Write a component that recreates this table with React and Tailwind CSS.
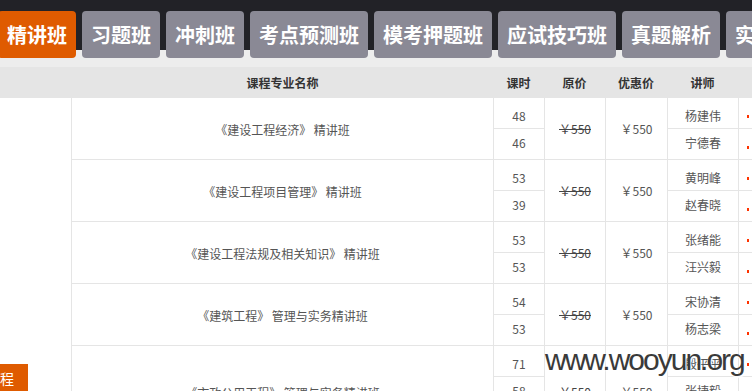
import React from "react";

const tabs = ["精讲班", "习题班", "冲刺班", "考点预测班", "模考押题班", "应试技巧班", "真题解析", "实战模拟"];

const groups = [
  { name: "《建设工程经济》 精讲班", rows: [["48", "杨建伟"], ["46", "宁德春"]] },
  { name: "《建设工程项目管理》 精讲班", rows: [["53", "黄明峰"], ["39", "赵春晓"]] },
  { name: "《建设工程法规及相关知识》 精讲班", rows: [["53", "张绪能"], ["53", "汪兴毅"]] },
  { name: "《建筑工程》 管理与实务精讲班", rows: [["54", "宋协清"], ["53", "杨志梁"]] },
  { name: "《市政公用工程》 管理与实务精讲班", rows: [["71", "殷平平"], ["58", "张捷毅"], ["46", "王东杰"]] },
];

function SubCol({ rows, render, width, text = true }) {
  return (
    <div className={`${width} flex flex-col border-l border-[#e5e5e5]`}>
      {rows.map((r, i) => (
        <div
          key={i}
          className={`flex justify-center ${
            i > 0 ? "border-t border-[#e5e5e5] h-[31px]" : "h-[30px]"
          } ${text ? (i === 0 ? "items-center pt-[6px]" : "items-center pb-[2px]") : "items-start pt-[17px]"}`}
        >
          {render(r)}
        </div>
      ))}
    </div>
  );
}

export default function App() {
  return (
    <div
      className="relative w-[752px] h-[391px] overflow-hidden bg-white text-[12px] text-[#555]"
      style={{ fontFamily: '"Noto Sans CJK SC", "Noto Sans", sans-serif' }}
    >
      <div className="h-[67px] bg-[linear-gradient(to_bottom,#222227_50px,#ededed_50px)] pt-[11px] flex gap-[6px] whitespace-nowrap">
        {tabs.map((t, i) => (
          <div
            key={t}
            className={`h-[47px] shrink-0 px-[9px] rounded-[4px] flex items-center text-[20px] font-bold text-white ${
              i === 0 ? "bg-[#df5b00] ml-[-2px]" : "bg-[#8a8995]"
            }`}
          >
            {t}
          </div>
        ))}
      </div>

      <div className="h-[31px] bg-[#e5e5e5] flex font-bold text-[#333] whitespace-nowrap">
        <div className="w-[72px]" />
        <div className="w-[421px] flex items-center justify-center">课程专业名称</div>
        <div className="w-[51px] flex items-center justify-center">课时</div>
        <div className="w-[61px] flex items-center justify-center">原价</div>
        <div className="w-[62px] flex items-center justify-center">优惠价</div>
        <div className="w-[71px] flex items-center justify-center">讲师</div>
      </div>

      <div className="flex">
        <div className="w-[71px] shrink-0 pt-[266px]">
          <div className="w-[28px] h-[28px] bg-[#df5b00] text-white text-[14px] flex items-center overflow-hidden">
            程
          </div>
        </div>
        <div className="flex-1 border-l border-[#e5e5e5]">
          {groups.map((g) => (
            <div key={g.name} className="flex border-b border-[#e5e5e5] whitespace-nowrap">
              <div className="w-[421px] flex items-center justify-center pt-[2px]">{g.name}</div>
              <SubCol width="w-[51px]" rows={g.rows} render={(r) => r[0]} />
              <div className="w-[61px] border-l border-[#e5e5e5] flex items-center justify-center line-through text-[#444]">
                ￥550
              </div>
              <div className="w-[62px] border-l border-[#e5e5e5] flex items-center justify-center">￥550</div>
              <SubCol width="w-[71px]" rows={g.rows} render={(r) => r[1]} />
              <SubCol
                width="w-[20px]"
                rows={g.rows}
                text={false}
                render={() => <span className="ml-[-2px] w-[2px] h-[3px] bg-[#ff3300]" />}
              />
            </div>
          ))}
        </div>
      </div>

      <div
        className="absolute left-[545px] top-[345px] text-[30px] tracking-[-2px] text-[#3a3a3a] leading-none"
        style={{ fontFamily: '"Liberation Sans", Arial, sans-serif', textShadow: "1px 2px 1px rgba(255,255,255,0.9)" }}
      >
        www.wooyun.org
      </div>
    </div>
  );
}
